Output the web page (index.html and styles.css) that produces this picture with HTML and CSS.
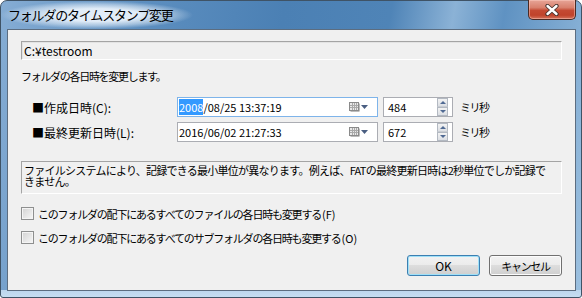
FILE: index.html
```html
<!DOCTYPE html>
<html lang="ja">

<head>
  <meta charset="utf-8">
  <title>フォルダのタイムスタンプ変更</title>
  <link rel="stylesheet" href="styles.css">
</head>

<body>
  <div class="window">
    <div class="titlebar">
      <span class="title">フォルダのタイムスタンプ変更</span>
      <div class="close">
        <svg width="14" height="12" viewBox="0 0 14 12">
          <path d="M2.5 2 L11.5 10 M11.5 2 L2.5 10" stroke="#43302c" stroke-width="4.2" stroke-linecap="round" fill="none" />
          <path d="M2.5 2 L11.5 10 M11.5 2 L2.5 10" stroke="#ffffff" stroke-width="2.4" stroke-linecap="round" fill="none" />
        </svg>
      </div>
    </div>

    <div class="client">
      <div class="path-box">C:¥testroom</div>
      <p class="lead">フォルダの各日時を変更します。</p>

      <div class="time-rows">
        <div class="time-row">
          <span class="time-label">■作成日時(C):</span>
          <div class="date-picker focused">
            <span class="date-text"><span class="sel">2008</span>/08/25 13:37:19</span>
            <svg class="cal" width="11" height="10" viewBox="0 0 11 10">
              <rect x="1.5" y="1.5" width="9" height="8" fill="#7b7b7b" />
              <rect x="0.5" y="0.5" width="9" height="8" fill="#e9e9e9" stroke="#8a8a8a" />
              <path d="M1 3.5 H9 M1 5.5 H9 M3.5 1 V8 M5.5 1 V8 M7.5 1 V8" stroke="#a9a9a9" />
            </svg>
            <svg class="drop" width="7" height="4" viewBox="0 0 7 4">
              <path d="M0 0 H7 L3.5 4 Z" fill="#4a5f82" />
            </svg>
          </div>
          <div class="spin-edit">
            <span>484</span>
            <div class="spin"><span class="up"></span><span class="down"></span></div>
          </div>
          <span class="unit">ミリ秒</span>
        </div>

        <div class="time-row">
          <span class="time-label">■最終更新日時(L):</span>
          <div class="date-picker">
            <span class="date-text">2016/06/02 21:27:33</span>
            <svg class="cal" width="11" height="10" viewBox="0 0 11 10">
              <rect x="1.5" y="1.5" width="9" height="8" fill="#7b7b7b" />
              <rect x="0.5" y="0.5" width="9" height="8" fill="#e9e9e9" stroke="#8a8a8a" />
              <path d="M1 3.5 H9 M1 5.5 H9 M3.5 1 V8 M5.5 1 V8 M7.5 1 V8" stroke="#a9a9a9" />
            </svg>
            <svg class="drop" width="7" height="4" viewBox="0 0 7 4">
              <path d="M0 0 H7 L3.5 4 Z" fill="#4a5f82" />
            </svg>
          </div>
          <div class="spin-edit">
            <span>672</span>
            <div class="spin"><span class="up"></span><span class="down"></span></div>
          </div>
          <span class="unit">ミリ秒</span>
        </div>
      </div>

      <div class="note">ファイルシステムにより、記録できる最小単位が異なります。例えば、FATの最終更新日時は2秒単位でしか記録で<br>きません。</div>

      <div class="checks">
        <label class="check"><span class="box"></span>このフォルダの配下にあるすべてのファイルの各日時も変更する<span class="key">(F)</span></label>
        <label class="check"><span class="box"></span>このフォルダの配下にあるすべてのサブフォルダの各日時も変更する<span class="key">(O)</span></label>
      </div>

      <div class="buttons">
        <button class="btn default">OK</button>
        <button class="btn">キャンセル</button>
      </div>
    </div>
  </div>
</body>

</html>
```

FILE: styles.css
```css
body {
  margin: 0;
  background: #ffffff;
  font-family: "Noto Sans CJK JP", sans-serif;
  font-size: 12px;
  color: #000;
}

/* window frame */
.window {
  width: 582px;
  height: 298px;
  box-sizing: border-box;
  border: 1px solid #3f5366;
  border-radius: 7px 7px 3px 3px;
  padding: 0 5px 6px 6px;
  display: flex;
  flex-direction: column;
  background:
    linear-gradient(#bcd6ee, #c6ddf1) no-repeat left bottom / 100% 7px,
    linear-gradient(100deg, #86add4 0%, #5d8fc0 22%, #4b80b4 45%, #4f84b7 62%, #8bb2d6 72%, #5f92c2 80%, #9dc1e0 100%);
}

.titlebar {
  height: 28px;
  display: flex;
  justify-content: space-between;
  align-items: flex-start;
}

.title {
  height: 28px;
  line-height: 27px;
  margin-left: -6px;
  padding: 0 20px 0 7px;
  font-size: 13px;
  letter-spacing: -1.2px;
  color: #000;
  background: radial-gradient(ellipse farthest-side, rgba(232, 241, 250, 0.95) 45%, rgba(232, 241, 250, 0.5) 75%, rgba(232, 241, 250, 0) 100%);
}

.close {
  width: 48px;
  height: 20px;
  box-sizing: border-box;
  margin-top: -1px;
  border: 1px solid #4a2a24;
  border-top: none;
  border-radius: 0 0 5px 5px;
  background: linear-gradient(#e7a597 0%, #d8806d 40%, #c44a33 55%, #c0432b 80%, #d4735c 100%);
  box-shadow: inset 0 0 0 1px rgba(255, 210, 200, 0.45);
  display: flex;
  align-items: center;
  justify-content: center;
}

/* client area */
.client {
  flex: 1;
  border: 1px solid #5c6d80;
  background: #f0f0f0;
  padding: 11px 13px 0 13px;
}

.path-box {
  height: 19px;
  box-sizing: border-box;
  border: 1px solid;
  border-color: #a4a4a4 #ffffff #ffffff #a4a4a4;
  box-shadow: 1px 1px 0 #e3e3e3 inset;
  padding-left: 2px;
  line-height: 17px;
}

.lead {
  margin: 9px 0 0;
  line-height: 14px;
  font-size: 11px;
  letter-spacing: -1.3px;
}

.time-rows {
  margin-top: 14px;
  display: flex;
  flex-direction: column;
  gap: 5px;
}

.time-row {
  height: 20px;
  display: flex;
  align-items: center;
}

.time-label {
  width: 156px;
  box-sizing: border-box;
  padding-left: 11px;
}

.date-picker {
  width: 201px;
  height: 20px;
  box-sizing: border-box;
  border: 1px solid #abadb3;
  background: #fff;
  display: flex;
  align-items: center;
  padding: 0 9px 0 1px;
}

.date-picker.focused {
  border-color: #7eb4ea;
}

.date-text {
  flex: 1;
  font-size: 11px;
  line-height: 13px;
}

.sel {
  background: #3399ff;
  color: #fff;
}

.cal {
  margin-right: 1px;
}

.spin-edit {
  width: 70px;
  height: 20px;
  box-sizing: border-box;
  margin-left: 5px;
  border: 1px solid #abadb3;
  background: #fff;
  display: flex;
  align-items: center;
  justify-content: space-between;
  padding: 0 4px 0 4px;
  font-size: 11px;
}

.spin {
  width: 11px;
  height: 18px;
  display: flex;
  flex-direction: column;
}

.spin span {
  flex: 1;
  box-sizing: border-box;
  border: 1px solid #b3b9c2;
  background: linear-gradient(#f3f3f3, #dcdfe4);
  display: flex;
  align-items: center;
  justify-content: center;
}

.spin .up {
  border-bottom-color: #c8ccd2;
}

.spin .up::after,
.spin .down::after {
  content: "";
  border-left: 3px solid transparent;
  border-right: 3px solid transparent;
}

.spin .up::after {
  border-bottom: 3px solid #506a93;
}

.spin .down::after {
  border-top: 3px solid #506a93;
}

.unit {
  margin-left: 7px;
  font-size: 11px;
  letter-spacing: -1.5px;
}

/* note box */
.note {
  margin-top: 19px;
  height: 33px;
  box-sizing: border-box;
  border: 1px solid;
  border-color: #a4a4a4 #ffffff #ffffff #a4a4a4;
  padding: 3px 0 0 2px;
  font-size: 11px;
  letter-spacing: -0.75px;
  line-height: 11px;
  white-space: nowrap;
}

.checks {
  margin-top: 13px;
  display: flex;
  flex-direction: column;
  gap: 11px;
}

.check {
  height: 13px;
  display: flex;
  align-items: center;
  font-size: 11px;
  letter-spacing: -1.2px;
}

.key {
  letter-spacing: 0;
  margin-left: 1px;
}

.box {
  width: 13px;
  height: 13px;
  box-sizing: border-box;
  margin-right: 4px;
  border: 1px solid #8e8f8f;
  background: linear-gradient(135deg, #d2d2d2, #f7f7f7);
  box-shadow: inset 0 0 0 1px #f4f4f4;
}

/* dialog buttons */
.buttons {
  margin-top: 11px;
  display: flex;
  justify-content: flex-end;
  gap: 9px;
}

.btn {
  width: 73px;
  height: 21px;
  padding: 0;
  border: 1px solid #707070;
  border-radius: 3px;
  background: linear-gradient(#f2f2f2 0%, #ebebeb 50%, #dddddd 50%, #cfcfcf 100%);
  box-shadow: inset 0 0 0 1px #fcfcfc;
  font-family: "Noto Sans CJK JP", sans-serif;
  font-size: 11px;
  letter-spacing: -1.3px;
  color: #000;
}

.btn.default {
  border-color: #3c7fb1;
  box-shadow: inset 0 0 0 1px #9fe0f8;
  font-size: 12px;
  letter-spacing: 0;
}
```
